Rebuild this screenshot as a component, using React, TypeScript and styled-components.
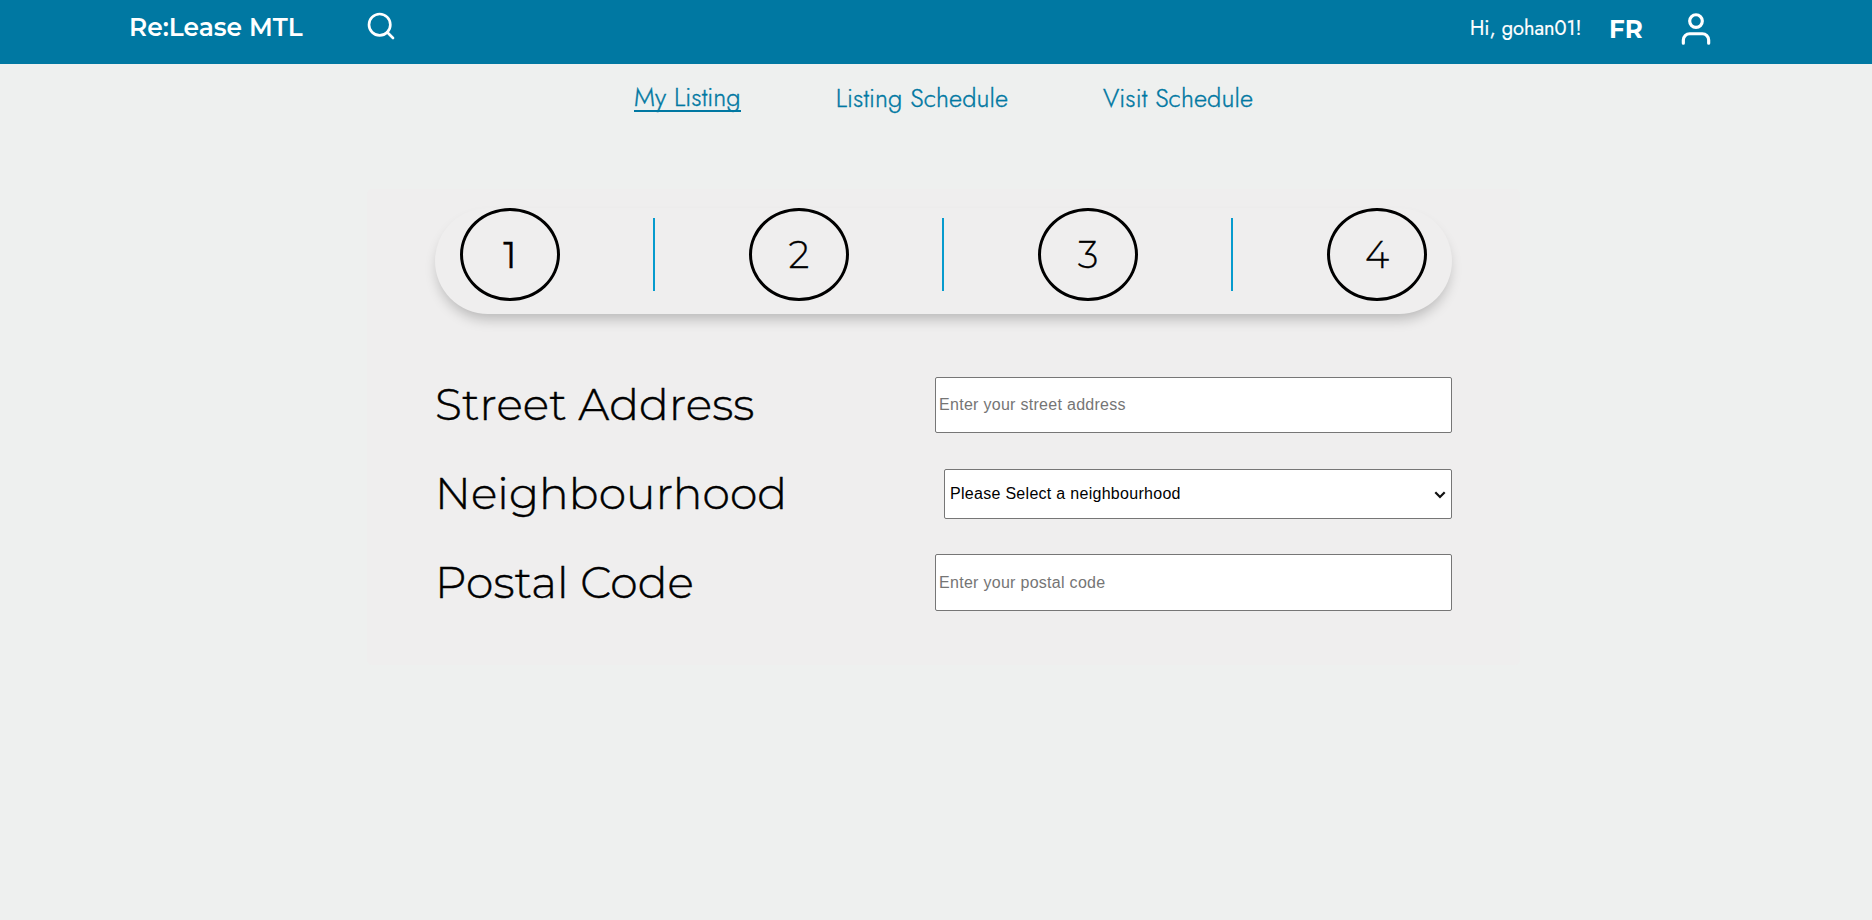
import React from 'react';
import styled, { createGlobalStyle } from 'styled-components';

const display = '"Montserrat", "Inter", "Liberation Sans", sans-serif';
const body = '"Jost", "Lato", "Liberation Sans", sans-serif';

const GlobalStyle = createGlobalStyle`
  * { box-sizing: border-box; }
  body { margin: 0; background: #eef0ef; color: #000; font-family: ${body}; font-variant-ligatures: none; }
  #root { min-height: 100vh; }
`;

const Header = styled.header`
  display: flex;
  justify-content: space-between;
  height: 64px;
  padding: 0 157px 0 129px;
  background: #0078a2;
  color: #fff;
`;

const HeaderLeft = styled.div`
  display: flex;
  align-items: center;
  gap: 61px;
  height: 54px;
  padding-bottom: 2px;
`;

const HeaderRight = styled.div`
  display: flex;
  align-items: center;
  height: 58px;
`;

const Brand = styled.div`
  width: 175px;
  padding-top: 2px;
  font: 600 24.9px/30px ${display};
  white-space: nowrap;
`;

const Greeting = styled.span`
  width: 138px;
  padding-bottom: 1px;
  font: 400 20px/24px ${body};
  -webkit-text-stroke: 0.2px;
  white-space: nowrap;
`;

const Language = styled.button`
  width: 69px;
  padding: 0 0 0 1px;
  border: 0;
  background: none;
  color: inherit;
  font: 700 24.5px/30px ${display};
  text-align: left;
`;

const Icon = styled.svg<{ $size: number }>`
  display: block;
  flex: none;
  width: ${p => p.$size}px;
  height: ${p => p.$size}px;
  fill: none;
  stroke: currentColor;
  stroke-width: 2;
  stroke-linecap: round;
  stroke-linejoin: round;
`;

const Nav = styled.nav`
  display: flex;
  align-items: center;
  justify-content: center;
  gap: 95px;
  height: 69px;
  padding-left: 15px;
`;

const NavLink = styled.a<{ $active?: boolean }>`
  color: #0078a2;
  border-bottom: ${p => (p.$active ? '2px solid #0078a2' : '0')};
  font: 300 25.6px/25px ${body};
  letter-spacing: 0.06px;
  -webkit-text-stroke: 0.35px;
  white-space: nowrap;
`;

const Main = styled.main`
  display: flex;
  justify-content: center;
  padding: 56px 0 0 15px;
`;

const Panel = styled.section`
  width: 1153px;
  height: 476px;
  padding: 19px 68px 0;
  border-radius: 5px;
  background: #efeeee;
`;

const Stepper = styled.ol`
  display: flex;
  align-items: flex-start;
  justify-content: space-between;
  height: 106px;
  margin: 0;
  padding: 0 25px;
  list-style: none;
  border-radius: 53px;
  background: #efeeee;
  box-shadow: 0 8px 13px -3px rgba(0, 0, 0, 0.23);
`;

const Step = styled.li<{ $current?: boolean }>`
  display: flex;
  align-items: center;
  justify-content: center;
  width: 100px;
  height: 93px;
  border: 3px solid #000;
  border-radius: 50%;
  font: ${p => (p.$current ? 400 : 300)} 37px/44px ${display};
  -webkit-text-stroke: 0.3px;
`;

const StepDivider = styled.li`
  width: 3px;
  height: 73px;
  margin-top: 10px;
  border-left: 2px solid #069bce;
`;

const Form = styled.form`
  padding-top: 46.6px;
`;

const Field = styled.div`
  display: flex;
  align-items: center;
  justify-content: space-between;
  height: 88.8px;
`;

const Label = styled.label`
  padding-bottom: 1px;
  font: 300 44px/50px ${display};
  letter-spacing: 0.13px;
  -webkit-text-stroke: 0.45px;
  white-space: nowrap;
`;

const Input = styled.input`
  width: 517px;
  height: 56.5px;
  padding: 1px 3px;
  border: 1px solid #767676;
  border-radius: 2px;
  background: #fff;
  font: 16px "Liberation Sans", Arial, sans-serif;
  letter-spacing: 0.29px;
  &::placeholder { color: #757575; }
`;

const SelectWrap = styled.div`
  position: relative;
  width: 508px;
`;

const Select = styled.select`
  display: block;
  width: 100%;
  height: 50px;
  padding: 0 5px;
  appearance: none;
  border: 1px solid #767676;
  border-radius: 2px;
  background: #fff;
  color: #000;
  font: 16px "Liberation Sans", Arial, sans-serif;
  letter-spacing: 0.29px;
`;

const Chevron = styled.svg`
  position: absolute;
  right: 6px;
  top: 22px;
  width: 12px;
  height: 8px;
  fill: none;
  stroke: #111;
  stroke-width: 2.2;
  pointer-events: none;
`;

const steps = [1, 2, 3, 4];

export default function App() {
  return (
    <>
      <GlobalStyle />
      <Header>
        <HeaderLeft>
          <Brand>Re:Lease MTL</Brand>
          <Icon $size={32} viewBox="0 0 24 24" aria-label="Search">
            <circle cx="11" cy="11" r="8" />
            <path d="M21 21l-4.35-4.35" />
          </Icon>
        </HeaderLeft>
        <HeaderRight>
          <Greeting>Hi, gohan01!</Greeting>
          <Language>FR</Language>
          <Icon $size={38} viewBox="0 0 24 24" aria-label="Account">
            <path d="M20 21v-2a4 4 0 0 0-4-4H8a4 4 0 0 0-4 4v2" />
            <circle cx="12" cy="7" r="4" />
          </Icon>
        </HeaderRight>
      </Header>
      <Nav>
        <NavLink $active>My Listing</NavLink>
        <NavLink>Listing Schedule</NavLink>
        <NavLink>Visit Schedule</NavLink>
      </Nav>
      <Main>
        <Panel>
          <Stepper>
            {steps.map((n, i) => (
              <React.Fragment key={n}>
                {i > 0 && <StepDivider />}
                <Step $current={i === 0}>{n}</Step>
              </React.Fragment>
            ))}
          </Stepper>
          <Form>
            <Field>
              <Label htmlFor="street">Street Address</Label>
              <Input id="street" placeholder="Enter your street address" />
            </Field>
            <Field>
              <Label htmlFor="area">Neighbourhood</Label>
              <SelectWrap>
                <Select id="area">
                  <option>Please Select a neighbourhood</option>
                </Select>
                <Chevron viewBox="0 0 12 8"><path d="M1.3 1.3L6 6l4.7-4.7" /></Chevron>
              </SelectWrap>
            </Field>
            <Field>
              <Label htmlFor="postal">Postal Code</Label>
              <Input id="postal" placeholder="Enter your postal code" />
            </Field>
          </Form>
        </Panel>
      </Main>
    </>
  );
}
